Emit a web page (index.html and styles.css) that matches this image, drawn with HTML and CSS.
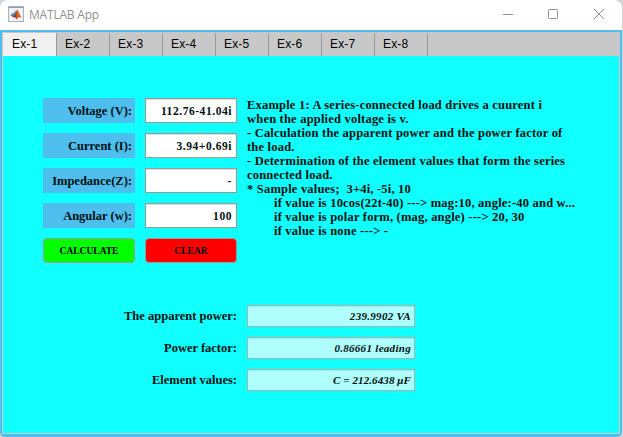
FILE: index.html
```
<!DOCTYPE html>
<html lang="en">
<head>
<meta charset="utf-8">
<title>MATLAB App</title>
<link rel="stylesheet" href="styles.css">
</head>
<body>
<div class="window">
  <header class="titlebar">
    <svg class="logo" width="16" height="16" viewBox="0 0 16 16">
      <defs><linearGradient id="peak" x1="0" x2="1"><stop offset="0" stop-color="#5a2430"/><stop offset=".4" stop-color="#b8401c"/><stop offset=".6" stop-color="#e8702c"/><stop offset="1" stop-color="#a83418"/></linearGradient></defs>
      <rect x=".5" y=".5" width="15" height="15" fill="#f0f2f4" stroke="#a9b0b8"/>
      <path d="M1 1.500h14" stroke="#8ba0b8"/>
      <path d="M2 9l3-1.500L8 4.500 7.200 10 5 11z" fill="#4f86b5"/>
      <path d="M4.500 11L7 8.500 9 3.500c1.500 1 2.500 5 4.800 8.200-1.800-1.200-2.700-.8-5.300 1.800-.5-1.500-1.500-2.600-4-2.500z" fill="url(#peak)"/>
    </svg>
    <h1>MATLAB App</h1>
    <svg class="controls" width="104" height="12" viewBox="0 0 104 12" fill="none" stroke="#8f8f8f">
      <path d="M0 5.500h10"/>
      <rect x="45.500" y="0.500" width="9" height="9" rx=".8"/>
      <path d="M91 0l10 10M101 0L91 10"/>
    </svg>
  </header>
  <main class="client">
    <nav class="tabs">
      <span class="tab active">Ex-1</span><span class="tab">Ex-2</span><span class="tab">Ex-3</span><span class="tab">Ex-4</span><span class="tab">Ex-5</span><span class="tab">Ex-6</span><span class="tab">Ex-7</span><span class="tab">Ex-8</span>
    </nav>
    <section class="panel">
      <div class="top">
        <div class="form">
          <div class="label">Voltage (V):</div><div class="field">112.76-41.04i</div>
          <div class="label">Current (I):</div><div class="field">3.94+0.69i</div>
          <div class="label">Impedance(Z):</div><div class="field">-</div>
          <div class="label">Angular (w):</div><div class="field">100</div>
          <button class="calc">CALCULATE</button><button class="clear">CLEAR</button>
        </div>
        <div class="description">
          <p>Example 1: A series-connected load drives a cuurent i</p>
          <p>when the applied voltage is v.</p>
          <p>- Calculation the apparent power and the power factor of</p>
          <p>the load.</p>
          <p>- Determination of the element values that form the series</p>
          <p>connected load.</p>
          <p>* Sample values;&nbsp; 3+4i, -5i, 10</p>
          <p class="indent">if value is 10cos(22t-40) ---&gt; mag:10, angle:-40 and w...</p>
          <p class="indent">if value is polar form, (mag, angle) ---&gt; 20, 30</p>
          <p class="indent">if value is none ---&gt; -</p>
        </div>
      </div>
      <div class="results">
        <div class="name">The apparent power:</div><div class="result">239.9902 VA</div>
        <div class="name">Power factor:</div><div class="result">0.86661 leading</div>
        <div class="name">Element values:</div><div class="result">C = 212.6438 μF</div>
      </div>
    </section>
  </main>
</div>
</body>
</html>
```

FILE: styles.css
```
* { box-sizing: border-box; }
body {
  margin: 0;
  width: 623px;
  height: 437px;
  overflow: hidden;
  background: #d4d4d4;
  font: bold 12.5px/14px "Liberation Serif", serif;
  color: #001010;
}
.window {
  width: 622px;
  height: 437px;
  display: flex;
  flex-direction: column;
  background: #4dbeee;
  border-radius: 7px 7px 5px 5px;
  overflow: hidden;
}
.titlebar {
  height: 30px;
  display: flex;
  align-items: center;
  padding: 0 15px 0 8px;
  background: #fff;
}
.titlebar h1 {
  margin: 0 auto 0 5px;
  font: 12px/16px "Open Sans", sans-serif;
  letter-spacing: -.2px;
  color: #929292;
}
.logo, .controls { display: block; }
.logo { margin-top: -2px; }
.client {
  flex: 1;
  display: flex;
  flex-direction: column;
  margin: 2px 2px 3px;
  background: #c8c8c8;
}
.tabs {
  height: 24px;
  display: flex;
  padding: 1px 0 0 1px;
}
.tab {
  width: 53px;
  padding: 0 0 0 8px;
  border-right: 1px solid #999;
  font: 12px/23px "Liberation Sans", sans-serif;
  letter-spacing: .15px;
  color: #000;
}
.tab:first-child { width: 54px; padding-left: 9px; }
.tab.active { background: #f0f0f0; }
.panel {
  flex: 1;
  margin: 0 1px 1px;
  padding: 42px 0 0 40px;
  background: #10ffff;
}
.top { display: flex; gap: 10px; }
.form {
  display: grid;
  grid-template-columns: 92px 92px;
  grid-auto-rows: 25px;
  gap: 10px;
}
.label {
  padding: 0 3px;
  background: #4dbeee;
  line-height: 26px;
  text-align: right;
  white-space: nowrap;
}
.field {
  padding: 0 4px;
  background: #fff;
  border: 1px solid #999;
  box-shadow: inset 0 1px #ddd;
  font-size: 11.5px;
  letter-spacing: .55px;
  line-height: 25px;
  text-align: right;
}
button {
  padding: 0;
  border: 1px solid #999;
  border-radius: 4px;
  font: bold 9.5px/22px "Liberation Serif", serif;
  color: #000;
}
.calc { background: #0f0; }
.clear { background: #f00; }
.description { white-space: nowrap; letter-spacing: .2px; }
.description p { margin: 0; }
.description .indent { padding-left: 27px; }
.results {
  display: grid;
  grid-template-columns: 194px 168px;
  grid-auto-rows: 22px;
  gap: 10px;
  margin-top: 42px;
}
.name { text-align: right; line-height: 23px; }
.result {
  padding: 0 3px;
  background: #afffff;
  border: 1px solid #a8b4b4;
  box-shadow: inset 0 1px #a4e6e6;
  font-size: 11px;
  font-style: italic;
  letter-spacing: .3px;
  line-height: 21px;
  text-align: right;
}
.result:last-child { letter-spacing: .1px; }
```
